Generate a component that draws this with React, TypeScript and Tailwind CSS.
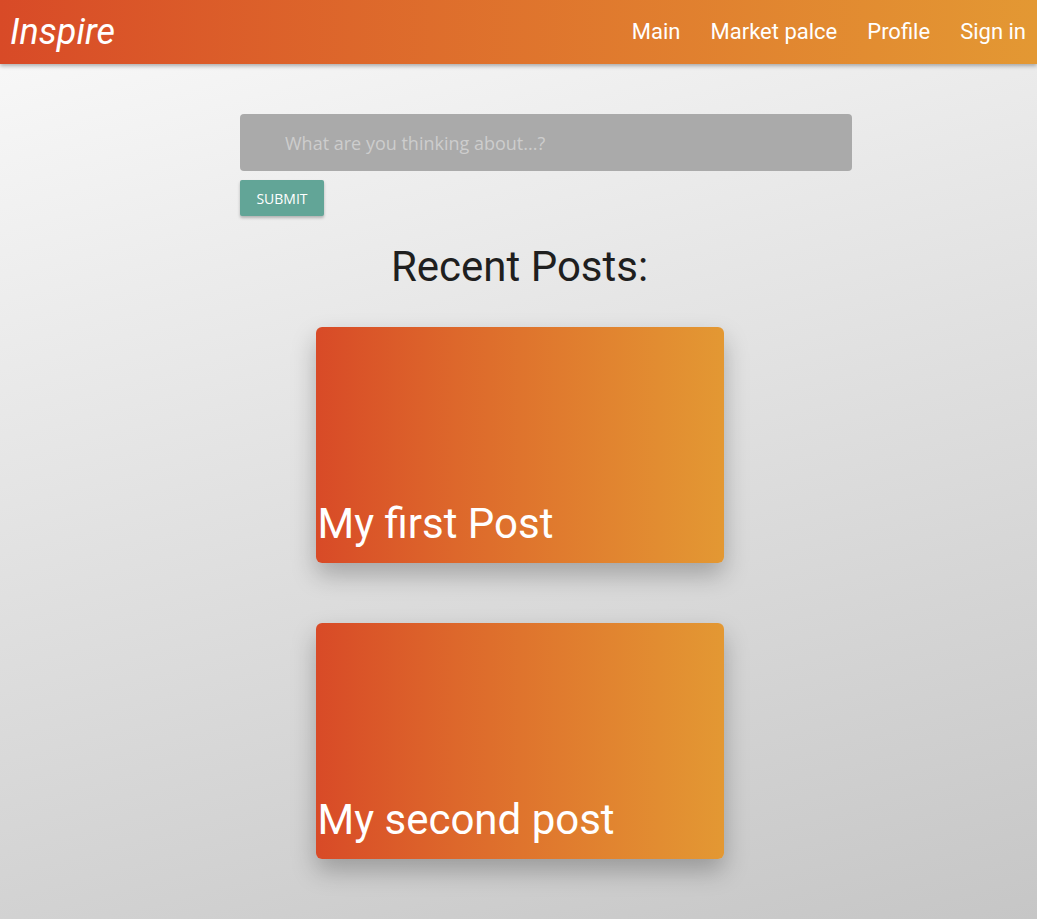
import { useState } from 'react'

function Navbar() {
  return (
    <nav className="relative z-10 flex h-16 items-center justify-between bg-gradient-to-r from-[#d84a27] to-[#e39833] pl-[10px] pr-[11px] shadow-[0_2px_4px_rgba(0,0,0,0.3)]">
      <a href="#" className="text-[36px] italic leading-none text-white">
        Inspire
      </a>
      <ul className="flex items-center gap-[30px] pb-[2px] text-[22px] text-white">
        <li><a href="#">Main</a></li>
        <li><a href="#">Market palce</a></li>
        <li><a href="#">Profile</a></li>
        <li><a href="#">Sign in</a></li>
      </ul>
    </nav>
  )
}

function PostCard({ title }: { title: string }) {
  return (
    <div className="flex h-[236px] w-[408px] items-end rounded-[6px] bg-gradient-to-r from-[#d84a27] to-[#e39833] pb-[15px] pl-[2px] shadow-[0_12px_24px_rgba(0,0,0,0.25)]">
      <h2 className="text-[42px] leading-[48px] text-white">{title}</h2>
    </div>
  )
}

export default function App() {
  const [text, setText] = useState('')
  const posts = ['My first Post', 'My second post']

  return (
    <div
      className="min-h-[919px] bg-[linear-gradient(165deg,#fafafa,#c6c6c6)]"
      style={{ fontFamily: 'Roboto, "Noto Sans", sans-serif' }}
    >
      <Navbar />
      <main className="flex flex-col items-center pt-[50px]">
        <form className="ml-[55px] w-[612px]" onSubmit={(e) => e.preventDefault()}>
          <input
            value={text}
            onChange={(e) => setText(e.target.value)}
            placeholder="What are you thinking about...?"
            className="h-[57px] w-full rounded-[4px] bg-[#aaaaaa] pl-[45px] text-[18px] text-white outline-none placeholder:text-[#cdcdcd]"
            style={{ fontFamily: '"Open Sans", "Noto Sans", sans-serif' }}
          />
          <button
            type="submit"
            className="mt-[9px] flex h-[36px] w-[84px] items-center justify-center rounded-[2px] bg-[#62a597] text-[14px] text-white shadow-[0_2px_3px_rgba(0,0,0,0.25)]"
            style={{ fontFamily: '"Open Sans", "Noto Sans", sans-serif' }}
          >
            SUBMIT
          </button>
        </form>
        <h1 className="mt-[24px] ml-[2px] text-[42px] leading-[54px] text-[#1f1f1f]">Recent Posts:</h1>
        <div className="mt-[33px] ml-[2px] flex flex-col gap-[60px]">
          {posts.map((p) => (
            <PostCard key={p} title={p} />
          ))}
        </div>
      </main>
    </div>
  )
}
